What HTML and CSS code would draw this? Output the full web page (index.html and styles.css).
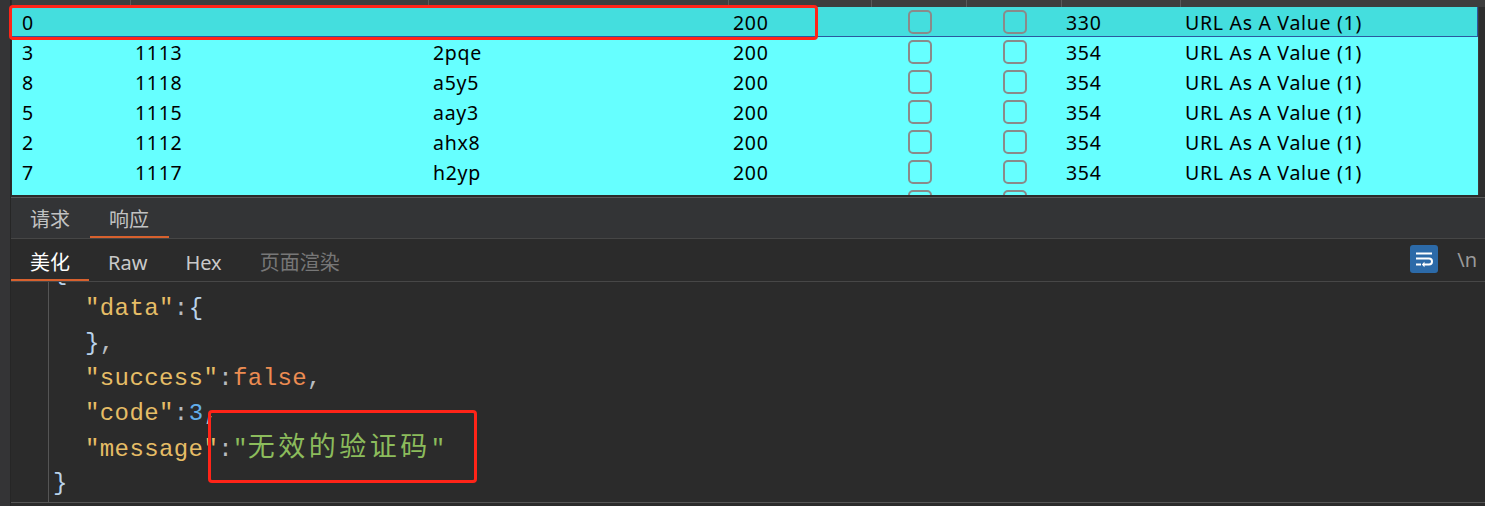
FILE: index.html
```html
<!DOCTYPE html>
<html lang="zh-CN">
<head>
<meta charset="utf-8">
<title>Intruder results</title>
<link rel="stylesheet" href="styles.css">
</head>
<body>
<div class="app">
  <div class="side"></div>
  <div class="main">
    <div class="table">
      <div class="thead">
        <div class="th"></div><div class="th sep"></div><div class="th sep"></div><div class="th sep"></div>
        <div class="th sep"></div><div class="th sep"></div><div class="th sep"></div><div class="th sep"></div>
      </div>
      <div class="tbody-wrap">
        <div class="tbody">
          <div class="row selected">
            <div class="td first">0</div><div class="td"></div><div class="td"></div><div class="td">200</div>
            <div class="td cb"><span class="box"></span></div><div class="td cb"><span class="box"></span></div>
            <div class="td">330</div><div class="td">URL As A Value (1)</div>
          </div>
          <div class="row">
            <div class="td first">3</div><div class="td">1113</div><div class="td">2pqe</div><div class="td">200</div>
            <div class="td cb"><span class="box"></span></div><div class="td cb"><span class="box"></span></div>
            <div class="td">354</div><div class="td">URL As A Value (1)</div>
          </div>
          <div class="row">
            <div class="td first">8</div><div class="td">1118</div><div class="td">a5y5</div><div class="td">200</div>
            <div class="td cb"><span class="box"></span></div><div class="td cb"><span class="box"></span></div>
            <div class="td">354</div><div class="td">URL As A Value (1)</div>
          </div>
          <div class="row">
            <div class="td first">5</div><div class="td">1115</div><div class="td">aay3</div><div class="td">200</div>
            <div class="td cb"><span class="box"></span></div><div class="td cb"><span class="box"></span></div>
            <div class="td">354</div><div class="td">URL As A Value (1)</div>
          </div>
          <div class="row">
            <div class="td first">2</div><div class="td">1112</div><div class="td">ahx8</div><div class="td">200</div>
            <div class="td cb"><span class="box"></span></div><div class="td cb"><span class="box"></span></div>
            <div class="td">354</div><div class="td">URL As A Value (1)</div>
          </div>
          <div class="row">
            <div class="td first">7</div><div class="td">1117</div><div class="td">h2yp</div><div class="td">200</div>
            <div class="td cb"><span class="box"></span></div><div class="td cb"><span class="box"></span></div>
            <div class="td">354</div><div class="td">URL As A Value (1)</div>
          </div>
          <div class="row">
            <div class="td first">4</div><div class="td">1114</div><div class="td">hk3d</div><div class="td">200</div>
            <div class="td cb"><span class="box"></span></div><div class="td cb"><span class="box"></span></div>
            <div class="td">354</div><div class="td">URL As A Value (1)</div>
          </div>
        </div>
        <div class="vscroll"></div>
      </div>
    </div>
    <div class="split"></div>
    <div class="tabs">
      <div class="tab">请求</div>
      <div class="tab active">响应</div>
    </div>
    <div class="subtabs">
      <div class="stab active">美化</div>
      <div class="stab">Raw</div>
      <div class="stab">Hex</div>
      <div class="stab disabled">页面渲染</div>
      <div class="tools">
        <span class="wrapbtn">
          <svg width="28" height="28" viewBox="0 0 28 28">
            <g fill="none" stroke="#fff" stroke-width="2" stroke-linecap="butt">
              <path d="M6 8.5H22"/>
              <path d="M6 13.5H19a3 3 0 0 1 0 6H14"/>
              <path d="M6 19.5H11"/>
            </g>
            <path d="M14.5 16.8L11.8 19.5L14.5 22.2Z" fill="#fff"/>
          </svg>
        </span>
        <span class="nl">\n</span>
      </div>
    </div>
    <div class="code">
      <div class="gutter"></div>
      <div class="lines">
        <div class="line l0"><span class="p">{</span></div>
        <div class="line l1"><span class="k">"data"</span><span class="c">:</span><span class="p">{</span></div>
        <div class="line l1"><span class="p">}</span><span class="c">,</span></div>
        <div class="line l1"><span class="k">"success"</span><span class="c">:</span><span class="b">false</span><span class="c">,</span></div>
        <div class="line l1"><span class="k">"code"</span><span class="c">:</span><span class="n">3</span><span class="c">,</span></div>
        <div class="line l1"><span class="k">"message"</span><span class="c">:</span><span class="s">"<span class="cjk">无效的验证码</span>"</span></div>
        <div class="line l0"><span class="p">}</span></div>
      </div>
    </div>
    <div class="bottom"></div>
  </div>
  <div class="mark mark1"></div>
  <div class="mark mark2"></div>
</div>
</body>
</html>
```

FILE: styles.css
```css
html, body {
  margin: 0;
  padding: 0;
  background: #2b2b2b;
}

.app {
  position: relative;
  display: flex;
  width: 1485px;
  height: 506px;
  overflow: hidden;
  font-family: "Noto Sans", "Noto Sans CJK SC", sans-serif;
}

.side {
  width: 10px;
  flex: none;
  background: #343436;
  border-right: 1px solid #262626;
}

.main {
  flex: 1;
  display: flex;
  flex-direction: column;
  min-width: 0;
}

/* ---------- table ---------- */
.table {
  height: 195px;
  display: flex;
  flex-direction: column;
  background: #2b2b2b;
  padding-left: 1px;
}

.thead {
  height: 7px;
  display: grid;
  grid-template-columns: 118px 298px 300px 143px 95px 95px 119px 298px 1fr;
  background: #3e3e3e;
  flex: none;
}

.th.sep {
  border-left: 1px solid #5a5a5a;
}

.tbody-wrap {
  flex: 1;
  display: flex;
  overflow: hidden;
}

.tbody {
  width: 1466px;
  flex: none;
}

.vscroll {
  flex: 1;
  background: #2e2e2e;
  border-left: 1px solid #3a3a3a;
}

.row {
  height: 30px;
  display: grid;
  grid-template-columns: 118px 298px 300px 143px 95px 95px 119px 298px;
  align-items: center;
  background: #66ffff;
  color: #000;
  font-size: 19.5px;
  letter-spacing: 0.7px;
  box-sizing: border-box;
}

.row.selected {
  background: #44dede;
  border-bottom: 1px solid #2a58a0;
  border-right: 1px solid #2a58a0;
}

.td {
  padding-left: 5px;
  padding-top: 2px;
  white-space: nowrap;
  line-height: 28px;
}

.td.first {
  padding-left: 10px;
}

.td.cb {
  padding-left: 0;
  padding-top: 0;
  display: flex;
  justify-content: center;
  align-items: center;
}

.box {
  display: block;
  width: 20px;
  height: 20px;
  border: 2px solid #8a8a8a;
  border-radius: 5px;
  margin-left: 2px;
}

.split {
  height: 3px;
  box-sizing: border-box;
  background: #2a2a2a;
  border-bottom: 1px solid #575757;
}

/* ---------- tabs ---------- */
.tabs {
  height: 41px;
  box-sizing: border-box;
  display: flex;
  background: #333436;
  border-bottom: 1px solid #464646;
}

.tab {
  padding: 5px 20px 0 19px;
  font-size: 20px;
  color: #c2c2c2;
  line-height: 33px;
  box-sizing: border-box;
  border-bottom: 2px solid transparent;
}

.tab.active {
  border-bottom-color: #d8612e;
}

.subtabs {
  height: 43px;
  box-sizing: border-box;
  display: flex;
  background: #2b2b2b;
  border-bottom: 1px solid #474747;
}

.stab {
  padding: 8px 19px 0 19px;
  font-size: 20px;
  color: #c9c9c9;
  line-height: 32px;
  border-bottom: 2px solid transparent;
}

.stab.active {
  color: #ffffff;
  border-bottom-color: #d8612e;
}

.stab.disabled {
  color: #777777;
}

.tools {
  margin-left: auto;
  display: flex;
  align-items: center;
  padding-right: 8px;
  padding-bottom: 2px;
}

.wrapbtn {
  width: 28px;
  height: 28px;
  border-radius: 3px;
  background: #2c6aa8;
  display: block;
}

.wrapbtn svg {
  display: block;
}

.nl {
  margin-left: 19px;
  color: #9a9a9a;
  font-size: 20px;
}

/* ---------- code ---------- */
.code {
  height: 220px;
  display: flex;
  overflow: hidden;
  background: #2b2b2b;
}

.gutter {
  width: 37px;
  flex: none;
  border-right: 1px solid #555;
}

.lines {
  margin-top: -26px;
  padding-left: 4px;
  font-family: "Liberation Mono", "DejaVu Sans Mono", "Noto Sans CJK SC", monospace;
  font-size: 24px;
  letter-spacing: 0.4px;
}

.line {
  height: 35px;
  line-height: 35px;
  white-space: pre;
}

.line.l1 {
  padding-left: 32px;
}

.k { color: #e6bd66; }
.c { color: #b8bcc0; }
.p { color: #b9d2ea; }
.b { color: #ec8c52; }
.n { color: #62aeea; }
.s { color: #8cbc5c; }

.cjk {
  font-family: "Noto Sans CJK SC", sans-serif;
  font-size: 27px;
  letter-spacing: 3.5px;
  line-height: 1;
}

.bottom {
  height: 1px;
  background: #555;
  margin-bottom: 3px;
}

/* ---------- annotations ---------- */
.mark {
  position: absolute;
  border: 3px solid #ff2418;
  border-radius: 4px;
  box-sizing: border-box;
  pointer-events: none;
}

.mark1 {
  left: 9px;
  top: 5px;
  width: 809px;
  height: 35px;
}

.mark2 {
  left: 208px;
  top: 410px;
  width: 269px;
  height: 73px;
}
```
